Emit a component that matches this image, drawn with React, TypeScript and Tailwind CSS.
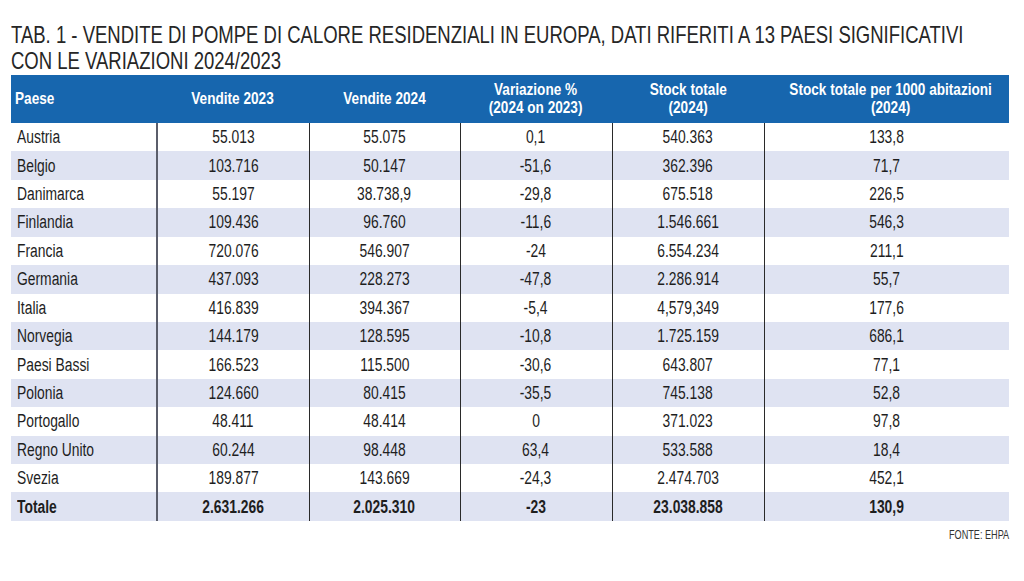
const rows: [string, string, string, string, string, string][] = [
  ["Austria", "55.013", "55.075", "0,1", "540.363", "133,8"],
  ["Belgio", "103.716", "50.147", "-51,6", "362.396", "71,7"],
  ["Danimarca", "55.197", "38.738,9", "-29,8", "675.518", "226,5"],
  ["Finlandia", "109.436", "96.760", "-11,6", "1.546.661", "546,3"],
  ["Francia", "720.076", "546.907", "-24", "6.554.234", "211,1"],
  ["Germania", "437.093", "228.273", "-47,8", "2.286.914", "55,7"],
  ["Italia", "416.839", "394.367", "-5,4", "4,579,349", "177,6"],
  ["Norvegia", "144.179", "128.595", "-10,8", "1.725.159", "686,1"],
  ["Paesi Bassi", "166.523", "115.500", "-30,6", "643.807", "77,1"],
  ["Polonia", "124.660", "80.415", "-35,5", "745.138", "52,8"],
  ["Portogallo", "48.411", "48.414", "0", "371.023", "97,8"],
  ["Regno Unito", "60.244", "98.448", "63,4", "533.588", "18,4"],
  ["Svezia", "189.877", "143.669", "-24,3", "2.474.703", "452,1"],
];

const total = ["Totale", "2.631.266", "2.025.310", "-23", "23.038.858", "130,9"];

// condensed look: the narrow face isn't installed, so squeeze Liberation Sans
const Cell = ({ children, left }: { children: React.ReactNode; left?: boolean }) => (
  <span className={`inline-block whitespace-nowrap scale-x-[0.77] ${left ? "origin-left" : "origin-center"}`}>
    {children}
  </span>
);

const Head = ({ children, left }: { children: React.ReactNode; left?: boolean }) => (
  <span className={`inline-block whitespace-nowrap scale-x-[0.8] ${left ? "origin-left" : "origin-center"}`}>
    {children}
  </span>
);

const Row = ({ cells, shaded, bold }: { cells: string[]; shaded: boolean; bold?: boolean }) => (
  <tr className={`h-[28.43px] ${shaded ? "bg-[#dfe3f2]" : "bg-white"} ${bold ? "font-bold" : ""}`}>
    <td className="pl-[6px] text-left border-r-2 border-[#5b5e6b]">
      <Cell left>{cells[0]}</Cell>
    </td>
    {cells.slice(1).map((c, i) => (
      <td key={i} className={`text-center ${i < 4 ? "border-r border-[#2a2a2a]" : ""}`}>
        <Cell>{c}</Cell>
      </td>
    ))}
  </tr>
);

export default function App() {
  return (
    <div className="w-[1024px] h-[581px] bg-white font-['Liberation_Sans',Arial,sans-serif] text-[#1e1e1e]">
      <div className="pl-[11px] pt-[22px]">
        <h1 className="text-[24px] leading-[26px] font-normal text-[#262626]">
          <span className="block whitespace-nowrap origin-left scale-x-[0.771]">
            TAB. 1 - VENDITE DI POMPE DI CALORE RESIDENZIALI IN EUROPA, DATI RIFERITI A 13 PAESI SIGNIFICATIVI
          </span>
          <span className="block whitespace-nowrap origin-left scale-x-[0.771]">CON LE VARIAZIONI 2024/2023</span>
        </h1>

        <table className="mt-[1px] w-[998px] table-fixed border-collapse text-[18px] leading-[20px]">
          <colgroup>
            <col className="w-[146px]" />
            <col className="w-[152px]" />
            <col className="w-[151px]" />
            <col className="w-[152px]" />
            <col className="w-[152px]" />
            <col className="w-[245px]" />
          </colgroup>
          <thead>
            <tr className="h-[48px] bg-[#1766ae] text-white text-[17px] leading-[18px]">
              <th className="pl-[4px] text-left font-bold">
                <Head left>Paese</Head>
              </th>
              <th className="text-center font-bold">
                <Head>Vendite 2023</Head>
              </th>
              <th className="text-center font-bold">
                <Head>Vendite 2024</Head>
              </th>
              <th className="text-center font-bold">
                <Head>
                  Variazione %<br />(2024 on 2023)
                </Head>
              </th>
              <th className="text-center font-bold">
                <Head>
                  Stock totale<br />(2024)
                </Head>
              </th>
              <th className="text-center font-bold">
                <Head>
                  Stock totale per 1000 abitazioni<br />(2024)
                </Head>
              </th>
            </tr>
          </thead>
          <tbody>
            {rows.map((r, i) => (
              <Row key={r[0]} cells={r} shaded={i % 2 === 1} />
            ))}
            <Row cells={total} shaded bold />
          </tbody>
        </table>

        <div className="w-[998px] mt-[7px] text-right text-[12px] leading-[14px] text-[#333]">
          <span className="inline-block whitespace-nowrap origin-right scale-x-[0.76]">FONTE: EHPA</span>
        </div>
      </div>
    </div>
  );
}
